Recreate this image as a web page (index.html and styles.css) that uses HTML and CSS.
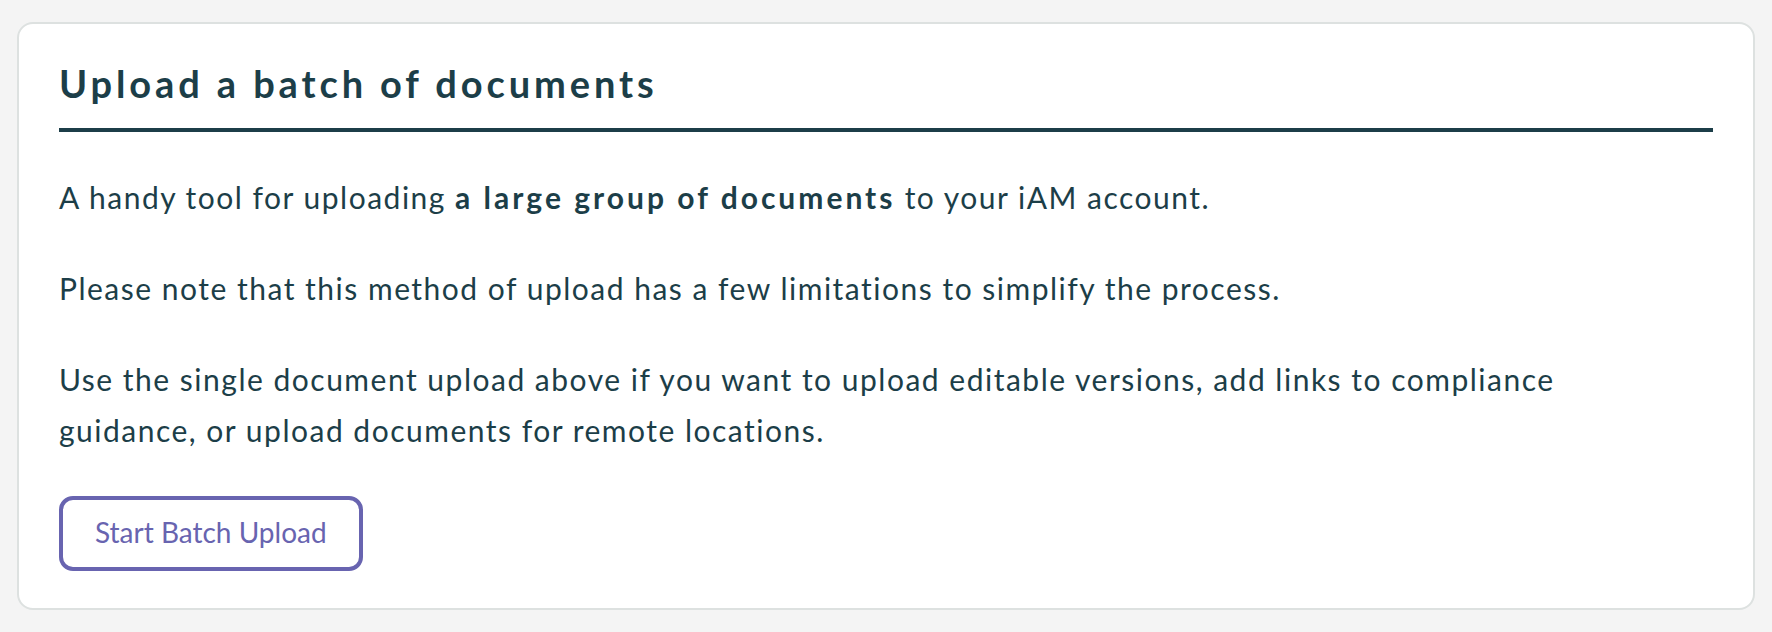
FILE: index.html
```html
<!DOCTYPE html>
<html lang="en">
<head>
    <meta charset="UTF-8">
    <meta name="viewport" content="width=device-width, initial-scale=1.0">
    <title>Batch Upload</title>
    <link rel="stylesheet" href="styles.css">
</head>
<body>

    <div class="card">
        <h2 class="card-title">Upload a batch of documents</h2>

        <p>A handy tool for uploading <strong>a large group of documents</strong> to your iAM account.</p>
        <p>Please note that this method of upload has a few limitations to simplify the process.</p>
        <p>Use the single document upload above if you want to upload editable versions, add links to compliance guidance, or upload documents for remote locations.</p>

        <button class="batch-button">Start Batch Upload</button>
    </div>

</body>
</html>
```

FILE: styles.css
```css
body {
    font-family: Lato, "Open Sans", sans-serif;
    background-color: #f4f4f4;
    color: #1c3e48;
    margin: 0;
    padding: 22px 17px 21px;
}

.card {
    background-color: #fff;
    border: 2px solid #dde1e0;
    border-radius: 16px;
    padding: 36px 40px 37px;
}

.card-title {
    font-size: 38px;
    line-height: 46px;
    font-weight: 700;
    letter-spacing: 3.9px;
    margin: 0 0 40px;
    padding-bottom: 22px;
    border-bottom: 4px solid #1c3e48;
}

p {
    font-size: 30px;
    line-height: 51px;
    letter-spacing: 1.5px;
    max-width: 1600px;
    margin: 0 0 40px;
}

strong {
    font-weight: 700;
    letter-spacing: 3px;
}

.batch-button {
    font-family: inherit;
    font-size: 28px;
    line-height: 35px;
    color: #6864b0;
    background-color: #fff;
    border: 4px solid #6864b0;
    border-radius: 14px;
    padding: 15px 32px 17px;
    cursor: pointer;
}

.batch-button:hover {
    background-color: #f3f2fa;
}
```
